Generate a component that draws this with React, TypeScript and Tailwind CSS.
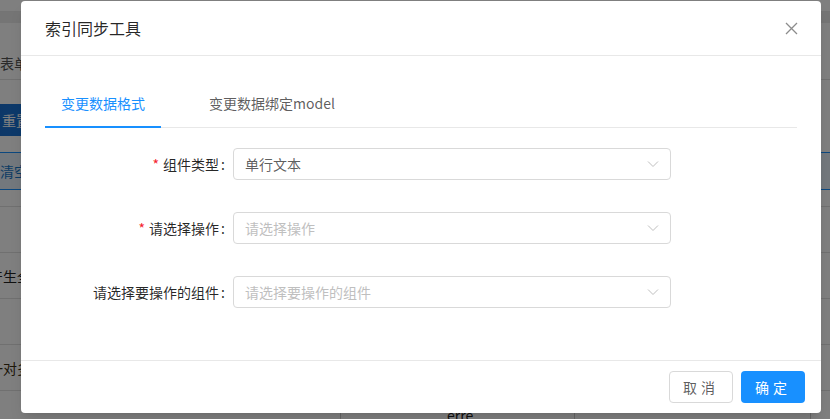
import React from "react";

const font = "font-['Microsoft_YaHei','Noto_Sans_CJK_SC',sans-serif]";

function Chevron() {
  return (
    <svg width="12" height="12" viewBox="0 0 12 12" className="shrink-0">
      <polyline points="1,3.5 6,8.5 11,3.5" fill="none" stroke="#bfbfbf" strokeWidth="1" />
    </svg>
  );
}

function Select({ value, placeholder }: { value?: string; placeholder: string }) {
  return (
    <div className="flex h-8 w-[438px] items-center justify-between rounded border border-[#d9d9d9] bg-white px-[11px]">
      <span className={value ? "text-[rgba(0,0,0,0.65)]" : "text-[#bfbfbf]"}>{value || placeholder}</span>
      <Chevron />
    </div>
  );
}

function Field({ label, required, children }: { label: string; required?: boolean; children: React.ReactNode }) {
  return (
    <div className="mb-6 flex h-10 items-center">
      <div className="flex w-[188px] items-center justify-end text-[rgba(0,0,0,0.85)]">
        {required && <span className="mr-1 text-[#f5222d]">*</span>}
        <span>{label}</span>
        <span className="ml-[2px] mr-2">:</span>
      </div>
      {children}
    </div>
  );
}

function PageBehind() {
  return (
    <div className="h-[419px] overflow-hidden bg-white text-sm">
      <div className="h-[12px] border-b border-[#e8e8e8]" />
      <div className="h-[11px] bg-[#eaeaea]" />
      <div className="flex h-[57px] items-end border-b border-[#e0e0e0] pb-1.5 text-[#555]">
        <span>表单设计</span>
      </div>
      <div className="h-6" />
      <div className="flex h-8 w-24 items-center bg-gradient-to-r from-[#1a6fd0] to-[#1f86ee] pl-[2px] text-white">
        重置
      </div>
      <div className="h-4" />
      <div className="flex h-[38px] items-center border-y border-[#1890ff] bg-[#e6f0fa] text-[#1979c9]">
        <span>清空</span>
      </div>
      <div className="h-[17px] border-b border-[#e0e0e0]" />
      <div className="h-[46px] border-b border-[#e0e0e0]" />
      <div className="flex h-[46px] items-center border-b border-[#e0e0e0] text-[#222]">
        <span className="-ml-[11px]">产生全部</span>
      </div>
      <div className="h-[46px] border-b border-[#e0e0e0]" />
      <div className="flex h-[46px] items-center border-b border-[#e0e0e0] text-[#3b2f10]">
        <span className="-ml-[11px]">一对多</span>
      </div>
      <div className="flex h-[46px]">
        <div className="w-[341px] border-r border-[#cfcfcf]" />
        <div className="w-[234px] border-r border-[#cfcfcf] pl-[106px] pt-[14px] text-[#222]">erre</div>
        <div className="w-[236px] border-r border-[#cfcfcf]" />
      </div>
    </div>
  );
}

export default function App() {
  return (
    <div className={`relative h-[419px] w-[830px] overflow-hidden text-sm ${font}`}>
      <PageBehind />
      <div className="absolute inset-0 bg-black/50" />
      <div className="absolute left-[21px] top-[1px] w-[800px] rounded bg-white shadow-lg">
        <div className="flex h-[55px] items-center justify-between border-b border-[#e8e8e8] px-6">
          <span className="text-base text-[rgba(0,0,0,0.85)]">索引同步工具</span>
          <svg width="13" height="13" viewBox="0 0 13 13" className="mr-[-1px]">
            <path d="M1 1 L12 12 M12 1 L1 12" stroke="#8c8c8c" strokeWidth="1.3" fill="none" />
          </svg>
        </div>
        <div className="p-6">
          <div className="mb-4 flex border-b border-[#e8e8e8]">
            <div className="-mb-px border-b-2 border-[#1890ff] px-4 py-3 leading-[22px] text-[#1890ff]">变更数据格式</div>
            <div className="ml-8 px-4 py-3 leading-[22px] text-[rgba(0,0,0,0.65)]">变更数据绑定model</div>
          </div>
          <Field label="组件类型" required>
            <Select value="单行文本" placeholder="" />
          </Field>
          <Field label="请选择操作" required>
            <Select placeholder="请选择操作" />
          </Field>
          <Field label="请选择要操作的组件">
            <Select placeholder="请选择要操作的组件" />
          </Field>
        </div>
        <div className="flex justify-end gap-2 border-t border-[#e8e8e8] px-4 py-2.5">
          <button className="h-8 w-16 rounded border border-[#d9d9d9] bg-white tracking-[4px] text-[rgba(0,0,0,0.65)]">
            取消
          </button>
          <button className="h-8 w-16 rounded bg-[#1890ff] tracking-[4px] text-white">确定</button>
        </div>
      </div>
    </div>
  );
}
